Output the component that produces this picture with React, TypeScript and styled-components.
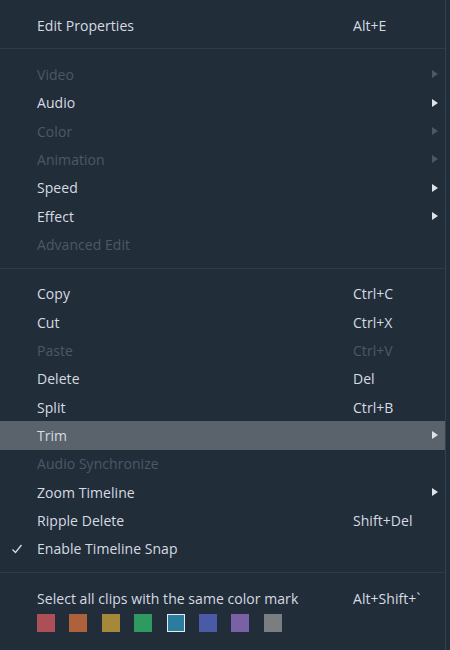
import React from 'react';
import styled, { createGlobalStyle } from 'styled-components';

const GlobalStyle = createGlobalStyle`
  html, body {
    margin: 0;
    padding: 0;
    background: #222d3a;
  }
  body {
    font-family: 'Open Sans', 'Noto Sans', sans-serif;
  }
`;

const Menu = styled.div`
  width: 446px;
  height: 650px;
  box-sizing: border-box;
  background: #222d3a;
  border-right: 1px solid #34404d;
  padding-top: 11px;
  display: flex;
  flex-direction: column;
`;

const Separator = styled.div`
  height: 1px;
  background: #2e3a47;
  margin: 9px 0 11px;
`;

const Row = styled.div<{ $disabled?: boolean; $active?: boolean }>`
  height: 28.33px;
  display: flex;
  align-items: center;
  position: relative;
  padding-left: 37px;
  font-size: 14px;
  letter-spacing: 0.05px;
  color: ${(p) => (p.$disabled ? '#4d5866' : '#d6dbe1')};
  background: ${(p) => (p.$active ? '#5a626c' : 'transparent')};
`;

const Label = styled.span`
  flex: 0 0 316px;
  white-space: nowrap;
`;

const Shortcut = styled.span`
  flex: 1;
  white-space: nowrap;
`;

const Arrow = styled.span<{ $disabled?: boolean }>`
  position: absolute;
  left: 432px;
  top: 50%;
  margin-top: -4px;
  width: 0;
  height: 0;
  border-top: 4px solid transparent;
  border-bottom: 4px solid transparent;
  border-left: 6px solid ${(p) => (p.$disabled ? '#4d5866' : '#dfe3e8')};
`;

const Check = styled.svg`
  position: absolute;
  left: 11px;
  top: 50%;
  margin-top: -6px;
`;

const Swatches = styled.div`
  display: flex;
  gap: 14.4px;
  padding: 2px 0 0 37px;
`;

const Swatch = styled.div<{ $color: string; $selected?: boolean }>`
  width: 18px;
  height: 18px;
  box-sizing: border-box;
  background: ${(p) => p.$color};
  border: ${(p) => (p.$selected ? '1.5px solid #e6edf2' : 'none')};
`;

type Item = {
  label: string;
  shortcut?: string;
  disabled?: boolean;
  submenu?: boolean;
  active?: boolean;
  checked?: boolean;
};

const groups: Item[][] = [
  [{ label: 'Edit Properties', shortcut: 'Alt+E' }],
  [
    { label: 'Video', disabled: true, submenu: true },
    { label: 'Audio', submenu: true },
    { label: 'Color', disabled: true, submenu: true },
    { label: 'Animation', disabled: true, submenu: true },
    { label: 'Speed', submenu: true },
    { label: 'Effect', submenu: true },
    { label: 'Advanced Edit', disabled: true },
  ],
  [
    { label: 'Copy', shortcut: 'Ctrl+C' },
    { label: 'Cut', shortcut: 'Ctrl+X' },
    { label: 'Paste', shortcut: 'Ctrl+V', disabled: true },
    { label: 'Delete', shortcut: 'Del' },
    { label: 'Split', shortcut: 'Ctrl+B' },
    { label: 'Trim', submenu: true, active: true },
    { label: 'Audio Synchronize', disabled: true },
    { label: 'Zoom Timeline', submenu: true },
    { label: 'Ripple Delete', shortcut: 'Shift+Del' },
    { label: 'Enable Timeline Snap', checked: true },
  ],
  [{ label: 'Select all clips with the same color mark', shortcut: 'Alt+Shift+`' }],
];

const colors = ['#ad4f57', '#ad623c', '#a6883a', '#2f9a60', '#2a7d9c', '#4a5aa6', '#7861a5', '#7b7e81'];

export default function App() {
  return (
    <>
      <GlobalStyle />
      <Menu>
        {groups.map((group, gi) => (
          <React.Fragment key={gi}>
            {gi > 0 && <Separator />}
            {group.map((item) => (
              <Row key={item.label} $disabled={item.disabled} $active={item.active}>
                {item.checked && (
                  <Check width="12" height="12" viewBox="0 0 12 12">
                    <path d="M1.5 6.5 L4.5 9.5 L10.5 2" fill="none" stroke="#d6dbe1" strokeWidth="1.3" />
                  </Check>
                )}
                <Label>{item.label}</Label>
                {item.shortcut && <Shortcut>{item.shortcut}</Shortcut>}
                {item.submenu && <Arrow $disabled={item.disabled} />}
              </Row>
            ))}
          </React.Fragment>
        ))}
        <Swatches>
          {colors.map((c, i) => (
            <Swatch key={c} $color={c} $selected={i === 4} />
          ))}
        </Swatches>
      </Menu>
    </>
  );
}
